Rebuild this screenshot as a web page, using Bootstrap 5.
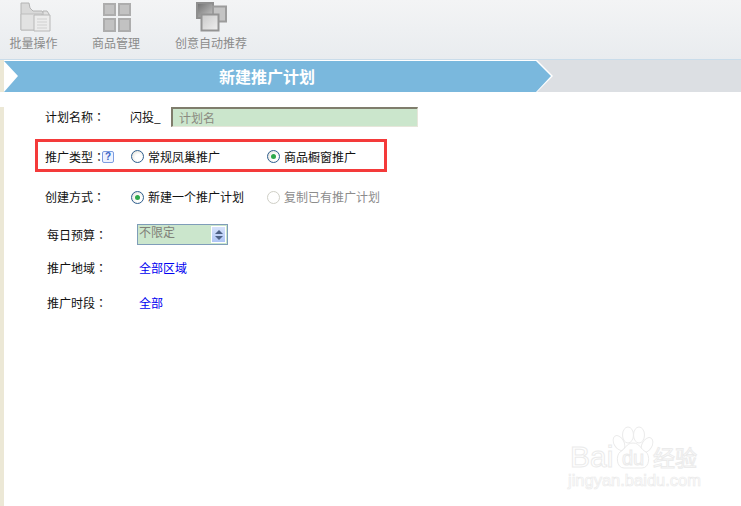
<!DOCTYPE html>
<html lang="zh">
<head>
<meta charset="utf-8">
<title>新建推广计划</title>
<link href="https://cdn.jsdelivr.net/npm/bootstrap@5.3.0/dist/css/bootstrap.min.css" rel="stylesheet">
<style>
html,body{height:506px;overflow:hidden}
body{font-family:"Noto Sans CJK SC","Liberation Sans",sans-serif;font-size:12px;line-height:14px;color:#111;background:#fff;position:relative}
.tb{height:60px;background:linear-gradient(#f3f4f5,#e9ecef);border-bottom:1px solid #c9dcea;position:relative}
.tb-item{display:flex;flex-direction:column;align-items:center;color:#8b8b8b;position:absolute;top:0}
.tb-item svg{display:block;height:34px}
.tb-item span{margin-top:2px;line-height:14px;white-space:nowrap}
.tb-a{left:9px;width:49px}.tb-b{left:92px;width:48px}.tb-c{left:175px;width:72px}
.ban{height:32px;background:#dcdfe3;position:relative}
.ban svg{position:absolute;left:0;top:0}
.ban-t{position:absolute;left:0;top:0;width:534px;line-height:32px;text-align:center;color:#fff;font-weight:700;font-size:16px}
.main{border-left:4px solid #ece8d6;height:414px;padding:0 0 0 41px;position:relative}
.frow{display:flex;align-items:center;height:20px}
.lab{width:86px;white-space:nowrap;flex:none;display:flex;align-items:center}
.ind{padding-left:2px}
.cl{font-family:"Noto Sans CJK TC",sans-serif}
.r1{margin-top:15px}.r2{margin-top:12px}.r3{margin-top:15px}.r4{margin-top:17px;height:21px}.r5{margin-top:13px}.r6{margin-top:15px}
.prefix{width:41px;flex:none;margin-left:-1px}
.nameinp{width:247px;height:20px;background:#cbe6cc;border:0;border-top:2px solid #7f7d6c;border-left:2px solid #7f7d6c;border-right:1px solid #e6e6da;border-bottom:1px solid #e6e6da;color:#8a8a80;padding:0 0 0 6px;font-size:12px;line-height:16px;display:flex;align-items:center}
.redbox{border:3px solid #f43a3a;width:352px;height:33px;margin-left:-10px;padding:2px 0 0 7px;display:flex;align-items:center}
.help{width:12px;height:12px;border:1px solid #7d9ce0;border-radius:2px;color:#3b63c4;font-size:10px;line-height:10px;text-align:center;background:#eef3ff;font-weight:700;font-family:"Liberation Sans",sans-serif;margin-left:-3px}
.ropt{display:flex;align-items:center;gap:4px;white-space:nowrap}
.rad{width:13px;height:13px;border-radius:50%;border:1px solid #2f5f8f;background:radial-gradient(circle at 60% 60%,#fff 35%,#d8d5ca);flex:none;position:relative}
.rad.on::after{content:"";position:absolute;left:3px;top:3px;width:5px;height:5px;border-radius:50%;background:#2fa84a}
.rad.off{border-color:#cfcfc6;background:#fff}
.dis{color:#8c8c8c}
.w136{width:136px}
.spin{width:91px;height:21px;border:1px solid #7f9db9;margin-left:6px;background:#cbe6cc;color:#808078;display:flex;justify-content:space-between;padding-left:1px;line-height:14px}
.spin-b{width:15px;height:17px;margin:1px;background:linear-gradient(#d6e2fb,#aec5f5);border:1px solid #fff;display:flex;flex-direction:column;align-items:center;justify-content:center;gap:2px}
.up{width:0;height:0;border:4px solid transparent;border-top:0;border-bottom:4px solid #4d6185}
.dn{width:0;height:0;border:4px solid transparent;border-bottom:0;border-top:4px solid #4d6185}
.lnk{color:#0000f0;text-decoration:none;margin-left:8px}
.wm{position:absolute;left:566px;top:425px}
.wm text,.wm path,.wm ellipse{fill:#fff;stroke:#ebebeb;stroke-width:1}
.wm .t1{font:400 30px "Liberation Sans",sans-serif}
.wm .t2{font:400 20px "Liberation Sans",sans-serif}
.wm .t3{font:400 22px "Noto Sans CJK SC",sans-serif}
.wm .t4{font:400 16.500px "Liberation Sans",sans-serif;stroke-width:.7}
</style>
</head>
<body>
<div class="tb">
  <div class="tb-item tb-a">
    <svg width="34" height="34" viewBox="0 0 34 34"><path d="M12 3H4v27h23V14l-2-3H16l-3-3z" fill="#d9d9d9" stroke="#b4b4b4"/><path d="M4 14h21v16H4z" fill="#e2e2e2" stroke="#bdbdbd"/><path d="M26 11h4l2 3v5h-6z" fill="#e0e0e0" stroke="#b4b4b4"/><path d="M17 15h16v16H17z" fill="#ececec" stroke="#b8b8b8"/><path d="M20 19h10M20 22h10M20 25h10M20 28h10" stroke="#d0d0d0"/></svg>
    <span>批量操作</span>
  </div>
  <div class="tb-item tb-b">
    <svg width="34" height="34" viewBox="0 0 34 34"><g fill="#c2c2c2" stroke="#adadad" stroke-width="2"><rect x="5" y="4" width="11" height="11"/><rect x="20" y="4" width="11" height="11"/><rect x="5" y="19" width="11" height="12"/><rect x="20" y="19" width="11" height="12"/></g></svg>
    <span>商品管理</span>
  </div>
  <div class="tb-item tb-c">
    <svg width="34" height="34" viewBox="0 0 34 34" class="ms-1"><defs><linearGradient id="g1" x1="0" y1="0" x2="1" y2="1"><stop offset="0" stop-color="#6f6f6f"/><stop offset="1" stop-color="#c8c8c8"/></linearGradient><linearGradient id="g2" x1="0" y1="0" x2="1" y2="1"><stop offset="0" stop-color="#c8c8c8"/><stop offset="1" stop-color="#f0f0f0"/></linearGradient></defs><rect x="1" y="3" width="16" height="15" fill="url(#g1)" stroke="#8f8f8f" stroke-width="2"/><rect x="17" y="6.500" width="13" height="15" fill="#c4c4c4" stroke="#9c9c9c" stroke-width="2"/><rect x="5.500" y="14.500" width="17" height="16" fill="url(#g2)" stroke="#949494" stroke-width="2"/></svg>
    <span>创意自动推荐</span>
  </div>
</div>
<div class="ban">
  <svg width="560" height="32" viewBox="0 0 560 32"><path d="M0 0H4V32H0z" fill="#ece8d6"/><path d="M4 0H537L553 16L537 32H4z" fill="#fff"/><path d="M4 1H536L551 16L536 32H4L18 16z" fill="#7ab8dd"/></svg>
  <div class="ban-t">新建推广计划</div>
</div>
<div class="main">
  <div class="frow r1"><div class="lab">计划名称<span class="cl">：</span></div><div class="prefix">闪投_</div><div class="nameinp">计划名</div></div>
  <div class="frow r2 redbox"><div class="lab">推广类型<span class="cl">：</span><span class="help">?</span></div><div class="ropt w136"><i class="rad"></i>常规凤巢推广</div><div class="ropt"><i class="rad on"></i>商品橱窗推广</div></div>
  <div class="frow r3"><div class="lab">创建方式<span class="cl">：</span></div><div class="ropt w136"><i class="rad on"></i>新建一个推广计划</div><div class="ropt dis"><i class="rad off"></i>复制已有推广计划</div></div>
  <div class="frow r4"><div class="lab ind">每日预算<span class="cl">：</span></div><div class="spin"><span>不限定</span><div class="spin-b"><i class="up"></i><i class="dn"></i></div></div></div>
  <div class="frow r5"><div class="lab ind">推广地域<span class="cl">：</span></div><a href="#" class="lnk">全部区域</a></div>
  <div class="frow r6"><div class="lab ind">推广时段<span class="cl">：</span></div><a href="#" class="lnk">全部</a></div>
</div>
<svg class="wm" width="170" height="70" viewBox="0 0 170 70"><ellipse cx="53" cy="18" rx="5" ry="8" transform="rotate(-30 53 18)"/><ellipse cx="62" cy="10" rx="5.500" ry="8"/><ellipse cx="73" cy="10" rx="5.500" ry="8"/><ellipse cx="81" cy="20" rx="5" ry="8" transform="rotate(30 81 20)"/><path d="M67 18C60 18 60 24 54 27C50 30 50 43 58 43H76C84 43 84 30 80 27C74 24 74 18 67 18z"/><text class="t1" x="4" y="42">Bai</text><text class="t2" x="56" y="40">du</text><text class="t3" x="87" y="41">经验</text><text class="t4" x="2" y="61">jingyan.baidu.com</text></svg>
<script src="https://cdn.jsdelivr.net/npm/bootstrap@5.3.0/dist/js/bootstrap.bundle.min.js"></script>
</body>
</html>
